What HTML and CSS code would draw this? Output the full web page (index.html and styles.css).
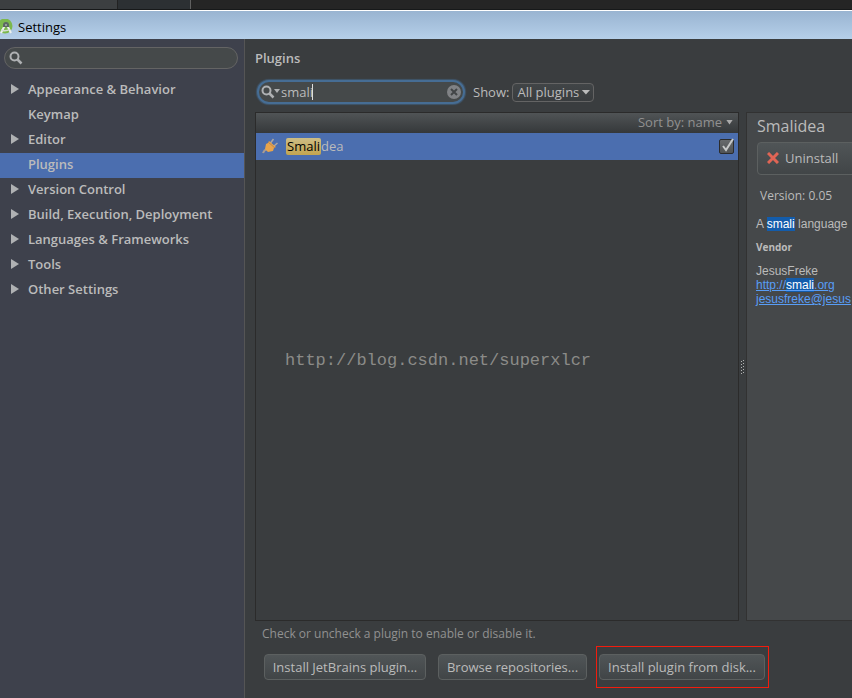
FILE: index.html
```html
<!DOCTYPE html>
<html lang="en">
<head>
<meta charset="utf-8">
<title>Settings</title>
<link rel="stylesheet" href="styles.css">
</head>
<body>
<div class="window">
  <div class="backdrop"><span class="tab"></span><span class="tab tab-dark"></span></div>
  <header class="titlebar">
    <svg class="logo" width="14" height="16" viewBox="0 0 14 16">
      <circle cx="5" cy="7" r="7.500" fill="#7cb84c"/>
      <path d="M5 6 1 14M7 6l4 8" stroke="#eef2ee" stroke-width="2" fill="none"/>
      <path d="M1 11q5 2 9-1" stroke="#d5dfd2" stroke-width="1.5" fill="none"/>
      <path d="M3 6a3 3 0 0 1 6 0v2H3z" fill="#5d6863"/>
      <circle cx="6" cy="6" r="1" fill="#a9b2ad"/>
    </svg>
    <span>Settings</span>
  </header>
  <div class="body">
    <aside class="sidebar">
      <label class="field side-search">
        <svg width="14" height="14" viewBox="0 0 14 14" fill="none" stroke="#afb1b3"><circle cx="5.5" cy="5.5" r="4" stroke-width="2"/><path d="m8.5 8.5 4 4" stroke-width="2.5"/></svg>
        <input type="text" aria-label="Search settings">
      </label>
      <nav class="tree">
        <a href="#" class="node parent">Appearance &amp; Behavior</a>
        <a href="#" class="node">Keymap</a>
        <a href="#" class="node parent">Editor</a>
        <a href="#" class="node selected">Plugins</a>
        <a href="#" class="node parent">Version Control</a>
        <a href="#" class="node parent">Build, Execution, Deployment</a>
        <a href="#" class="node parent">Languages &amp; Frameworks</a>
        <a href="#" class="node parent">Tools</a>
        <a href="#" class="node parent">Other Settings</a>
      </nav>
    </aside>
    <main class="main">
      <h1 class="heading">Plugins</h1>
      <div class="filters">
        <div class="field plugin-search">
          <svg width="19" height="14" viewBox="0 0 19 14" fill="none" stroke="#afb1b3"><circle cx="5.5" cy="5.5" r="4" stroke-width="2"/><path d="m8.5 8.5 4 4" stroke-width="2.5"/><path d="M13 4h6l-3 4z" fill="#afb1b3" stroke="none"/></svg>
          <span class="entry"><input type="text" value="smali" aria-label="Search plugins"><i class="caret"></i></span>
          <button class="clear" aria-label="Clear"><svg width="14" height="14" viewBox="0 0 14 14"><circle cx="7" cy="7" r="7" fill="#808285"/><path d="m4 4 6 6m0-6-6 6" stroke="#424547" stroke-width="2"/></svg></button>
        </div>
        <label class="show" for="show">Show:</label>
        <span class="combo"><select id="show"><option>All plugins</option></select><i class="arrow"></i></span>
      </div>
      <div class="panes">
        <section class="list">
          <button class="sort">Sort by: name<i class="arrow"></i></button>
          <div class="row">
            <svg width="16" height="16" viewBox="0 0 16 16"><path d="M1 15q1-3 4-4" stroke="#a99b91" stroke-width="2" fill="none"/><path d="m8.500 5 3-4M12 8l3.500-3" stroke="#aaa6a5" stroke-width="1.500"/><path d="m7 3 7 6-2 1-1 3-5 1-3-3 1-5 2-1z" fill="#e8a44c"/><path d="m6 4 7 6" stroke="#b88752"/></svg>
            <label for="smalidea" class="name"><mark>Smali</mark>dea</label>
            <span class="check"><input type="checkbox" id="smalidea" checked><svg width="16" height="16" viewBox="0 0 16 16"><path d="m4 8 3 4 7-11" fill="none" stroke="#c7c9c9" stroke-width="2"/></svg></span>
          </div>
          <p class="watermark">http://blog.csdn.net/superxlcr</p>
        </section>
        <div class="splitter"><svg width="5" height="15" viewBox="0 0 5 15" fill="#b1b3b3"><path d="M0 2h1v1H0zM0 5h1v1H0zM0 8h1v1H0zM0 11h1v1H0zM0 14h1v1H0zM2 1h1v1H2zM2 4h1v1H2zM2 7h1v1H2zM2 10h1v1H2zM2 13h1v1H2z"/></svg></div>
        <section class="details">
          <h2>Smalidea</h2>
          <button class="button uninstall"><svg width="12" height="12" viewBox="0 0 12 12"><path d="m1 1 10 10m0-10L1 11" stroke="#e06555" stroke-width="3"/></svg>Uninstall</button>
          <p class="version">Version: 0.05</p>
          <p class="about">A <mark>smali</mark> language</p>
          <h3>Vendor</h3>
          <address>JesusFreke<br><a href="#">http://<mark>smali</mark>.org</a><br><a href="#">jesusfreke@jesus</a></address>
        </section>
      </div>
      <p class="hint">Check or uncheck a plugin to enable or disable it.</p>
      <div class="actions">
        <button class="button">Install JetBrains plugin...</button>
        <button class="button">Browse repositories...</button>
        <span class="callout"><button class="button">Install plugin from disk...</button></span>
      </div>
    </main>
  </div>
</div>
</body>
</html>
```
FILE: styles.css
```css
* { box-sizing: border-box; }
body {
  margin: 0;
  background: #3a3d3f;
  color: #bbbbbb;
  font: 13px/20px "Open Sans", "Noto Sans", sans-serif;
}
h1, h2, h3, p { margin: 0; }
button, input, select { font: inherit; color: inherit; margin: 0; }
svg { flex: none; display: block; }
a { color: inherit; }

.window { min-height: 100vh; display: flex; flex-direction: column; overflow: hidden; }
.backdrop { display: flex; height: 10px; background: #252525; border-bottom: 1px solid #17191a; }
.tab { width: 118px; background: #3c3f41; border-right: 1px solid #222; }
.tab-dark { width: 73px; background: #2c3033; border-right: 1px solid #606060; }
.titlebar {
  display: flex;
  align-items: center;
  gap: 4px;
  height: 29px;
  padding-top: 4px;
  border-top: 1px solid #fff;
  background: linear-gradient(#99b4d1, #b5cfe9);
  color: #000;
}
.body { flex: 1; display: flex; }

.sidebar { flex: none; width: 245px; background: #3e414c; border-right: 1px solid #555; }
.field {
  display: flex;
  align-items: center;
  border: 1px solid #646464;
  border-radius: 13px;
  background: #45494a;
}
.field input { border: 0; padding: 0; background: none; outline: 0; min-width: 0; width: 100%; }
.side-search { height: 22px; margin: 8px 6px 9px 4px; padding: 0 4px; }
.node {
  display: flex;
  align-items: center;
  height: 25px;
  padding: 0 0 3px 28px;
  font-weight: 600;
  text-decoration: none;
  white-space: nowrap;
}
.parent { padding-left: 11px; }
.parent::before {
  content: "";
  width: 8px;
  height: 10px;
  margin-right: 9px;
  background: #afb1b3;
  clip-path: polygon(0 0, 100% 50%, 0 100%);
}
.selected { background: #4b6eaf; }

.main { flex: 1; min-width: 0; display: flex; flex-direction: column; padding: 9px 0 10px 10px; }
.heading { font-size: 13px; line-height: 20px; font-weight: 600; }
.filters { display: flex; align-items: center; height: 26px; margin: 11px 0 7px 2px; }
.plugin-search {
  width: 208px;
  height: 24px;
  padding: 0 2px;
  gap: 1px;
  border: 2px solid #466d94;
  box-shadow: 0 0 1px 1px #40566b;
}
.entry { flex: 1; position: relative; display: flex; }
.caret { position: absolute; left: 31px; top: 2px; width: 1px; height: 16px; background: #ddd; }
.clear { border: 0; padding: 0; background: none; }
.show { margin: 0 3px 0 8px; }
.combo { position: relative; }
.combo select {
  display: block;
  width: 82px;
  height: 19px;
  padding: 0 4px;
  appearance: none;
  border: 1px solid #646464;
  border-radius: 4px;
  background: linear-gradient(#414547, #393c3e);
  line-height: 16px;
}
.arrow { width: 9px; height: 5px; background: #bbb; clip-path: polygon(0 0, 100% 0, 50% 100%); }
.combo .arrow { position: absolute; right: 4px; top: 7px; pointer-events: none; }

.panes { flex: 1; display: flex; min-height: 0; }
.list { flex: 1; min-width: 0; border: 1px solid #2b2b2b; }
.sort {
  display: flex;
  align-items: center;
  justify-content: flex-end;
  gap: 4px;
  width: 100%;
  height: 20px;
  padding: 0 5px 2px;
  border: 0;
  background: linear-gradient(#505456, #35383a);
  color: #919191;
}
.sort .arrow { width: 7px; background: #aaa; }
.row { display: flex; align-items: center; height: 27px; padding: 0 4px 1px 6px; background: #4b6eaf; }
.name { flex: 1; margin-left: 8px; }
.name mark {
  display: inline-block;
  height: 17px;
  padding: 0 1px;
  border-radius: 2px;
  background: linear-gradient(#cdbd85, #c2a550);
  color: #000;
  line-height: 17px;
}
.check { position: relative; }
.check input {
  display: block;
  width: 15px;
  height: 15px;
  appearance: none;
  border: 1px solid #2c2c2c;
  border-radius: 2px;
  background: linear-gradient(#686b6d, #505355);
}
.check svg { position: absolute; left: 0; top: -1px; pointer-events: none; }
.watermark {
  margin: 191px 0 0 29px;
  color: #8b8b88;
  font: 17px/20px "Liberation Mono", monospace;
}
.splitter { flex: none; width: 7px; display: flex; align-items: center; padding-left: 2px; }
.details {
  flex: none;
  width: 106px;
  overflow: hidden;
  padding: 3px 0 0 9px;
  border: 1px solid #323232;
  border-right: 0;
  background: #45484a;
  white-space: nowrap;
}
.details h2 { margin-left: 1px; font-size: 16px; line-height: 20px; font-weight: normal; }
.button {
  display: flex;
  align-items: center;
  justify-content: center;
  height: 26px;
  padding: 0 6px 1px;
  border: 1px solid #5c6060;
  border-radius: 4px;
  background: linear-gradient(#505557, #414547);
  white-space: nowrap;
}
.uninstall { height: 33px; margin: 6px 0 0 1px; gap: 6px; padding: 0 24px 2px 9px; }
.version { margin: 11px 0 8px 4px; font-size: 12px; }
.about { font: 12px/20px "Liberation Sans", sans-serif; }
.details mark { background: #135cab; color: #fff; }
.details h3 { margin-top: 3px; font-size: 10px; line-height: 20px; }
address { margin-top: 7px; font: 12px/14px "Liberation Sans", sans-serif; }
address a { color: #589df6; }

.hint { margin: 4px 0 0 7px; font-size: 12px; line-height: 18px; color: #919191; }
.actions { display: flex; align-items: center; gap: 12px; margin: 3px 0 0 9px; }
.actions .button { min-width: 149px; }
.actions > .button:first-child { min-width: 162px; }
.callout { margin-left: -3px; padding: 7px 3px 7px 2px; border: 1px solid #f21c0d; }
.callout .button { min-width: 166px; }
```
